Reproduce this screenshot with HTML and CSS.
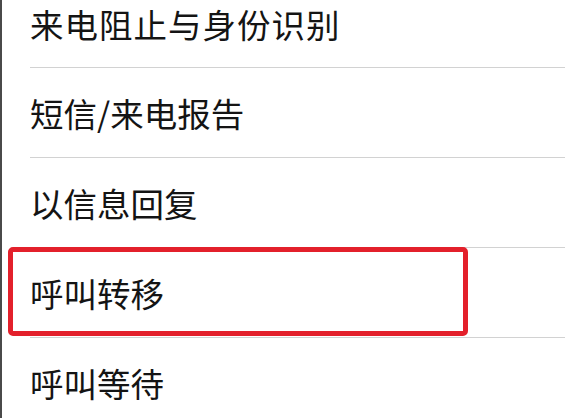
FILE: index.html
```html
<!DOCTYPE html>
<html lang="zh-CN">
<head>
<meta charset="utf-8">
<link rel="stylesheet" href="styles.css">
</head>
<body>
<div class="screen">
  <ul class="list">
    <li class="row row-first"><span class="label">来电阻止与身份识别</span></li>
    <li class="row"><span class="label">短信/来电报告</span></li>
    <li class="row"><span class="label">以信息回复</span></li>
    <li class="row"><span class="label">呼叫转移</span><span class="highlight"></span></li>
    <li class="row"><span class="label">呼叫等待</span></li>
  </ul>
</div>
</body>
</html>
```
FILE: styles.css
```css
html, body {
  margin: 0;
  padding: 0;
  background: #ffffff;
  overflow: hidden;
}
.screen {
  width: 565px;
  height: 418px;
  box-sizing: border-box;
  border-left: 2px solid #4a4a4a;
  overflow: hidden;
  background: #ffffff;
}
.list {
  list-style: none;
  margin: 0 0 0 28px;
  padding: 0;
}
.row {
  position: relative;
  height: 89px;
  border-bottom: 1px solid #d2d2d2;
  display: flex;
  align-items: center;
  font-family: "Noto Sans CJK SC", "Noto Sans", sans-serif;
  font-size: 33.5px;
  color: #141414;
}
.row-first {
  height: 68px;
  box-sizing: border-box;
  align-items: flex-start;
  padding-top: 6px;
}
.row-first .label {
  letter-spacing: 1px;
}
.label {
  display: block;
  line-height: 1;
  padding-top: 1px;
}
.highlight {
  position: absolute;
  left: -22px;
  top: -1px;
  width: 460px;
  height: 89px;
  box-sizing: border-box;
  border: 5px solid #e3202b;
  border-radius: 5px;
}
```
